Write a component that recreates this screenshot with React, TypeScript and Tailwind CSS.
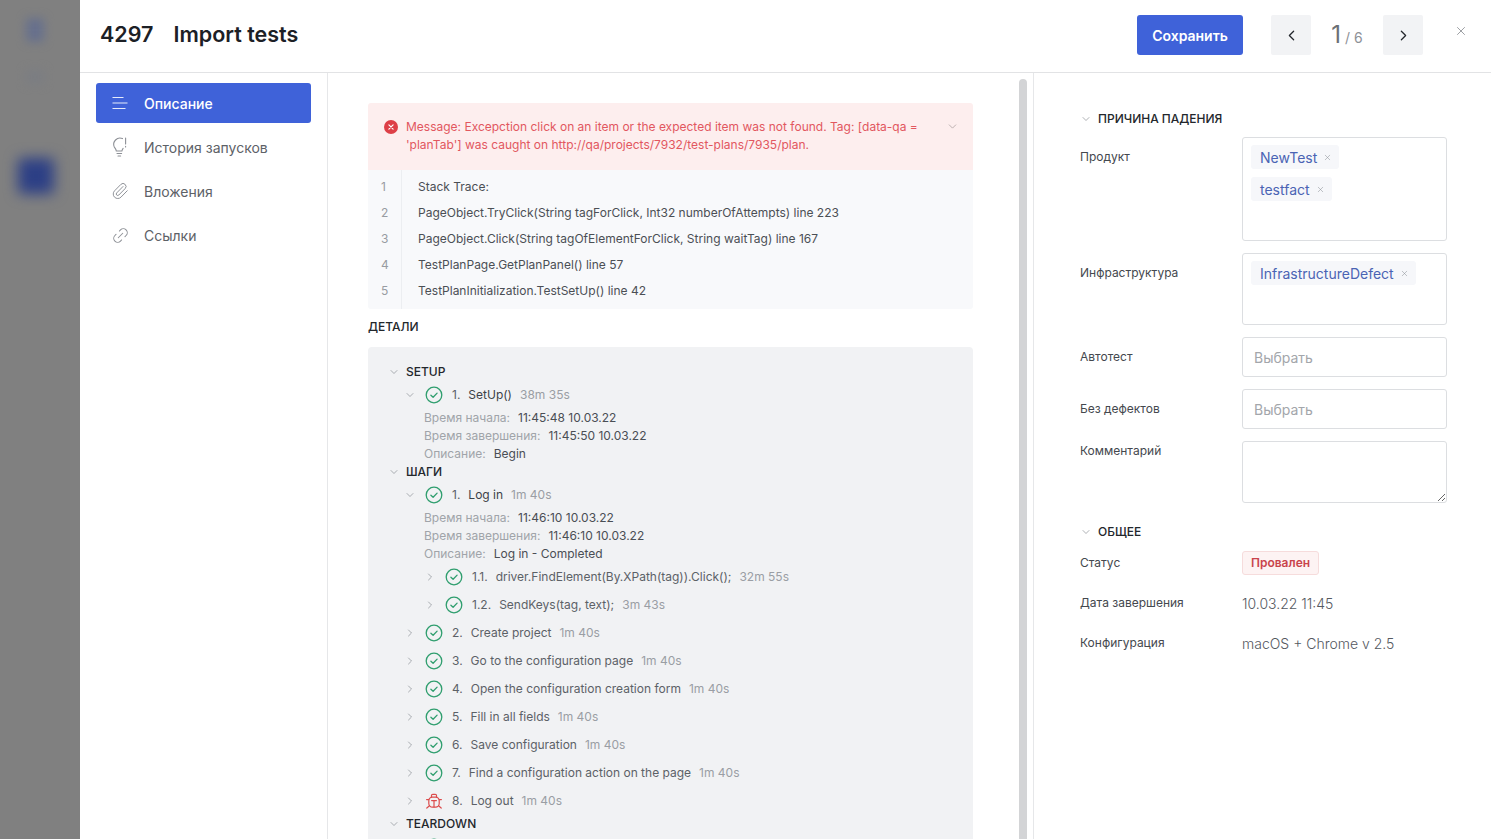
import { ChevronDown, ChevronLeft, ChevronRight, Link2, Paperclip, X } from "lucide-react";
import type { ReactNode } from "react";

const F = "font-['Inter','Noto_Sans',sans-serif]";

function Check() {
  return (
    <svg width="18" height="18" viewBox="0 0 18 18" fill="none" className="shrink-0">
      <circle cx="9" cy="9" r="7.8" stroke="#2f9e6e" strokeWidth="1.3" />
      <path d="M5.9 9.2l2.2 2.1 4-4.2" stroke="#2f9e6e" strokeWidth="1.3" strokeLinecap="round" strokeLinejoin="round" />
    </svg>
  );
}

function Bug() {
  return (
    <svg width="18" height="18" viewBox="0 0 18 18" fill="none" className="shrink-0" stroke="#dc4c4c" strokeWidth="1.2" strokeLinecap="round">
      <rect x="3.8" y="5.2" width="10.4" height="10" rx="3.6" />
      <path d="M6.5 5V3.6a1.3 1.3 0 0 1 1.3-1.3h2.4a1.3 1.3 0 0 1 1.3 1.3V5" />
      <path d="M1.6 7.6h2.2M14.2 7.6h2.2M1.8 16l2.4-2M16.2 16l-2.4-2" />
      <path d="M6.6 8.6h4.8M9 8.6v6.4" />
    </svg>
  );
}

function Heading({ children }: { children: ReactNode }) {
  return (
    <div className="flex h-[18px] items-center pl-[20px] text-[12px] font-medium text-[#23272c]">
      <ChevronDown size={12} strokeWidth={1.2} className="mr-[6px] text-[#777c83]" />
      {children}
    </div>
  );
}

function Step({ n, name, time, open, sub, icon }: { n: string; name: string; time: string; open?: boolean; sub?: boolean; icon?: ReactNode }) {
  return (
    <div className={`flex h-[28px] items-center text-[12px] text-[#5c6167] ${sub ? "pl-[56px]" : "pl-[36px]"}`}>
      {open ? (
        <ChevronDown size={12} strokeWidth={1.2} className="mr-[9px] shrink-0 text-[#777c83]" />
      ) : (
        <ChevronRight size={12} strokeWidth={1.2} className="mr-[9px] shrink-0 text-[#777c83]" />
      )}
      {icon ?? <Check />}
      <span className="ml-[9px] mr-[8px]">{n}</span>
      <span className={open ? "text-[#3d4248]" : ""}>{name}</span>
      <span className="ml-[8px] text-[#9a9ea4]">{time}</span>
    </div>
  );
}

function Info({ label, value }: { label: string; value: string }) {
  return (
    <div className="flex h-[18px] items-center pl-[56px] text-[12px]">
      <span className="mr-[8px] text-[#a0a4a9]">{label}</span>
      <span className="text-[#4a4e54]">{value}</span>
    </div>
  );
}

function Tag({ children }: { children: ReactNode }) {
  return (
    <div className="flex h-[24px] w-fit items-center rounded-[3px] bg-[#f6f7fa] pl-[9px] pr-[7px] text-[14px] text-[#4a64b4]">
      {children}
      <X size={9} strokeWidth={1.4} className="ml-[6px] text-[#8b8f95]" />
    </div>
  );
}

function FieldRow({ label, children, center }: { label: string; children: ReactNode; center?: boolean }) {
  return (
    <div className={`flex ${center ? "items-center" : "items-start"}`}>
      <div className={`w-[162px] shrink-0 text-[12px] text-[#44484e] ${center ? "" : "pt-[11px]"}`}>{label}</div>
      {children}
    </div>
  );
}

function Selector() {
  return (
    <div className="flex h-[40px] w-[205px] items-center rounded-[3px] border border-[#dcdee1] pl-[11px] text-[14px] text-[#a3a6ab]">Выбрать</div>
  );
}

const STACK = [
  "Stack Trace:",
  "PageObject.TryClick(String tagForClick, Int32 numberOfAttempts) line 223",
  "PageObject.Click(String tagOfElementForClick, String waitTag) line 167",
  "TestPlanPage.GetPlanPanel() line 57",
  "TestPlanInitialization.TestSetUp() line 42",
];

export default function App() {
  return (
    <div className={`${F} flex h-screen w-full overflow-hidden bg-white`}>
      <div className="relative w-[80px] shrink-0 overflow-hidden bg-[#808080]">
        <div className="absolute left-[26px] top-[18px] h-[24px] w-[18px] rounded bg-[#67708c] blur-[5px]" />
        <div className="absolute left-[26px] top-[70px] h-[14px] w-[18px] rounded bg-[#7b7d82] blur-[5px]" />
        <div className="absolute left-[18px] top-[158px] h-[36px] w-[36px] rounded bg-[#2c3f85] blur-[7px]" />
      </div>

      <div className="flex min-w-0 flex-1 flex-col">
        <header className="flex h-[73px] shrink-0 items-start border-b border-[#e2e3e5] pl-[20px]">
          <div className="mt-[20px] flex text-[21.5px] font-semibold leading-[28px] text-[#1c2026]">
            <span className="mr-[20px]">4297</span>
            <span>Import tests</span>
          </div>
          <div className="ml-auto mt-[15px] flex items-start">
            <button className="h-[40px] w-[106px] rounded-[3px] bg-[#3f62d9] text-[14px] font-semibold text-white">Сохранить</button>
            <button className="ml-[28px] flex h-[40px] w-[40px] items-center justify-center rounded-[2px] bg-[#f2f3f5] text-[#23272c]">
              <ChevronLeft size={17} strokeWidth={1.8} />
            </button>
            <div className="flex h-[40px] w-[72px] items-center justify-center text-[#6b6f75]">
              <span className="text-[24px] leading-none">1</span>
              <span className="ml-[4px] mt-[4px] text-[14px] text-[#8e9197]">/ 6</span>
            </div>
            <button className="flex h-[40px] w-[40px] items-center justify-center rounded-[2px] bg-[#f2f3f5] text-[#23272c]">
              <ChevronRight size={17} strokeWidth={1.8} />
            </button>
            <button className="ml-[31px] mr-[23px] mt-[9px] text-[#7d8187]">
              <X size={14} strokeWidth={1.3} />
            </button>
          </div>
        </header>

        <div className="flex min-h-0 flex-1">
          <nav className="flex w-[248px] shrink-0 flex-col gap-[4px] border-r border-[#e6e7e9] pl-[16px] pr-[16px] pt-[10px] text-[14px]">
            <div className="flex h-[40px] items-center rounded-[3px] bg-[#3f62d9] pl-[15px] font-medium text-white">
              <svg width="18" height="18" viewBox="0 0 18 18" fill="none" stroke="#e6ebfb" strokeWidth="1.2" className="mr-[15px]">
                <path d="M1.5 3.5h11M1.5 9h15M1.5 14.5h13" />
              </svg>
              Описание
            </div>
            <div className="flex h-[40px] items-center pl-[15px] text-[#5d6167]">
              <svg width="18" height="22" viewBox="0 0 18 22" fill="none" stroke="#8d9096" strokeWidth="1.1" strokeLinecap="round" className="mr-[15px]">
                <path d="M11.5 2.6A6.3 6.3 0 0 0 3.3 11c.8 1.3 1.8 2.2 2 4h5.6c.2-1.1.6-1.8 1.2-2.6" />
                <path d="M6 17.5h4.6M7 20h2.6M14.6 2v6M14.6 10.4v.6" />
              </svg>
              История запусков
            </div>
            <div className="flex h-[40px] items-center pl-[15px] text-[#5d6167]">
              <Paperclip size={18} strokeWidth={1.3} className="mr-[15px] text-[#8d9096]" />
              Вложения
            </div>
            <div className="flex h-[40px] items-center pl-[15px] text-[#5d6167]">
              <Link2 size={19} strokeWidth={1.3} className="mr-[14px] -rotate-45 text-[#8d9096]" />
              Ссылки
            </div>
          </nav>

          <main className="relative w-[706px] shrink-0 overflow-hidden border-r border-[#e6e7e9] pl-[40px] pt-[30px]">
            <div className="absolute bottom-[-20px] left-[691px] top-[6px] w-[8px] rounded-[4px] bg-[#d3d4d6]" />
            <div className="w-[605px]">
              <div className="flex h-[67px] rounded-t-[3px] bg-[#fdeeee] pl-[16px] pt-[15px] text-[12px] leading-[18px] text-[#e2575f]">
                <svg width="14" height="14" viewBox="0 0 14 14" className="mt-[2px] shrink-0">
                  <circle cx="7" cy="7" r="7" fill="#dd3f47" />
                  <path d="M4.9 4.9l4.2 4.2M9.1 4.9l-4.2 4.2" stroke="#fff" strokeWidth="1.2" strokeLinecap="round" />
                </svg>
                <div className="ml-[8px] w-[530px]">
                  Message: Excepction click on an item or the expected item was not found. Tag: [data-qa = 'planTab'] was caught on http://qa/projects/7932/test-plans/7935/plan.
                </div>
                <ChevronDown size={13} strokeWidth={1.2} className="ml-[10px] mt-[2px] text-[#9a8f90]" />
              </div>
              <div className="flex h-[139px] rounded-b-[3px] bg-[#f8f9fb] pt-[4px] text-[12px]">
                <div className="-mt-[4px] w-[34px] shrink-0 border-r border-[#eceef1] pt-[4px]">
                  {STACK.map((_, i) => (
                    <div key={i} className="flex h-[26px] items-center pl-[13px] text-[#989ca2]">{i + 1}</div>
                  ))}
                </div>
                <div className="pl-[16px] text-[#4b4f55]">
                  {STACK.map((s) => (
                    <div key={s} className="flex h-[26px] items-center">{s}</div>
                  ))}
                </div>
              </div>

              <div className="mb-[11px] mt-[9px] flex h-[18px] items-center text-[12px] font-medium text-[#23272c]">ДЕТАЛИ</div>

              <div className="rounded-t-[4px] bg-[#f1f2f4] pt-[16px]">
                <Heading>SETUP</Heading>
                <Step n="1." name="SetUp()" time="38m 35s" open />
                <Info label="Время начала:" value="11:45:48 10.03.22" />
                <Info label="Время завершения:" value="11:45:50 10.03.22" />
                <Info label="Описание:" value="Begin" />
                <Heading>ШАГИ</Heading>
                <Step n="1." name="Log in" time="1m 40s" open />
                <Info label="Время начала:" value="11:46:10 10.03.22" />
                <Info label="Время завершения:" value="11:46:10 10.03.22" />
                <Info label="Описание:" value="Log in - Completed" />
                <Step sub n="1.1." name="driver.FindElement(By.XPath(tag)).Click();" time="32m 55s" />
                <Step sub n="1.2." name="SendKeys(tag, text);" time="3m 43s" />
                <Step n="2." name="Create project" time="1m 40s" />
                <Step n="3." name="Go to the configuration page" time="1m 40s" />
                <Step n="4." name="Open the configuration creation form" time="1m 40s" />
                <Step n="5." name="Fill in all fields" time="1m 40s" />
                <Step n="6." name="Save configuration" time="1m 40s" />
                <Step n="7." name="Find a configuration action on the page" time="1m 40s" />
                <Step n="8." name="Log out" time="1m 40s" icon={<Bug />} />
                <Heading>TEARDOWN</Heading>
                <div className="flex h-[28px] items-center pl-[57px]">
                  <Check />
                </div>
              </div>
            </div>
          </main>

          <aside className="min-w-0 flex-1 pl-[46px] pt-[37px]">
            <div className="mb-[9px] flex h-[18px] items-center text-[12px] font-medium text-[#23272c]">
              <ChevronDown size={12} strokeWidth={1.2} className="mr-[6px] text-[#777c83]" />
              ПРИЧИНА ПАДЕНИЯ
            </div>
            <div className="flex flex-col gap-[12px]">
              <FieldRow label="Продукт">
                <div className="flex h-[104px] w-[205px] flex-col gap-[8px] rounded-[3px] border border-[#dcdee1] pl-[8px] pt-[7px]">
                  <Tag>NewTest</Tag>
                  <Tag>testfact</Tag>
                </div>
              </FieldRow>
              <FieldRow label="Инфраструктура">
                <div className="h-[72px] w-[205px] rounded-[3px] border border-[#dcdee1] pl-[8px] pt-[7px]">
                  <Tag>InfrastructureDefect</Tag>
                </div>
              </FieldRow>
              <FieldRow center label="Автотест"><Selector /></FieldRow>
              <FieldRow center label="Без дефектов"><Selector /></FieldRow>
              <div className="flex items-start">
                <div className="w-[162px] shrink-0 pt-px text-[12px] text-[#44484e]">Комментарий</div>
                <textarea className="block h-[62px] w-[205px] rounded-[3px] border border-[#dcdee1]" />
              </div>
            </div>
            <div className="mt-[20px] flex h-[18px] items-center text-[12px] font-medium text-[#23272c]">
              <ChevronDown size={12} strokeWidth={1.2} className="mr-[6px] text-[#777c83]" />
              ОБЩЕЕ
            </div>
            <div className="mt-[2px]">
              <div className="flex h-[40px] items-center text-[12px] text-[#44484e]">
                <div className="w-[162px]">Статус</div>
                <div className="flex h-[24px] items-center rounded-[3px] border border-[#f6dcdc] bg-[#fdf3f3] px-[8px] font-semibold text-[#c9444c]">Провален</div>
              </div>
              <div className="flex h-[40px] items-center text-[12px] text-[#44484e]">
                <div className="w-[162px]">Дата завершения</div>
                <div className="text-[14px] font-light text-[#55595f]">10.03.22 11:45</div>
              </div>
              <div className="flex h-[40px] items-center text-[12px] text-[#44484e]">
                <div className="w-[162px]">Конфигурация</div>
                <div className="text-[14px] font-light text-[#55595f]">macOS + Chrome v 2.5</div>
              </div>
            </div>
          </aside>
        </div>
      </div>
    </div>
  );
}
